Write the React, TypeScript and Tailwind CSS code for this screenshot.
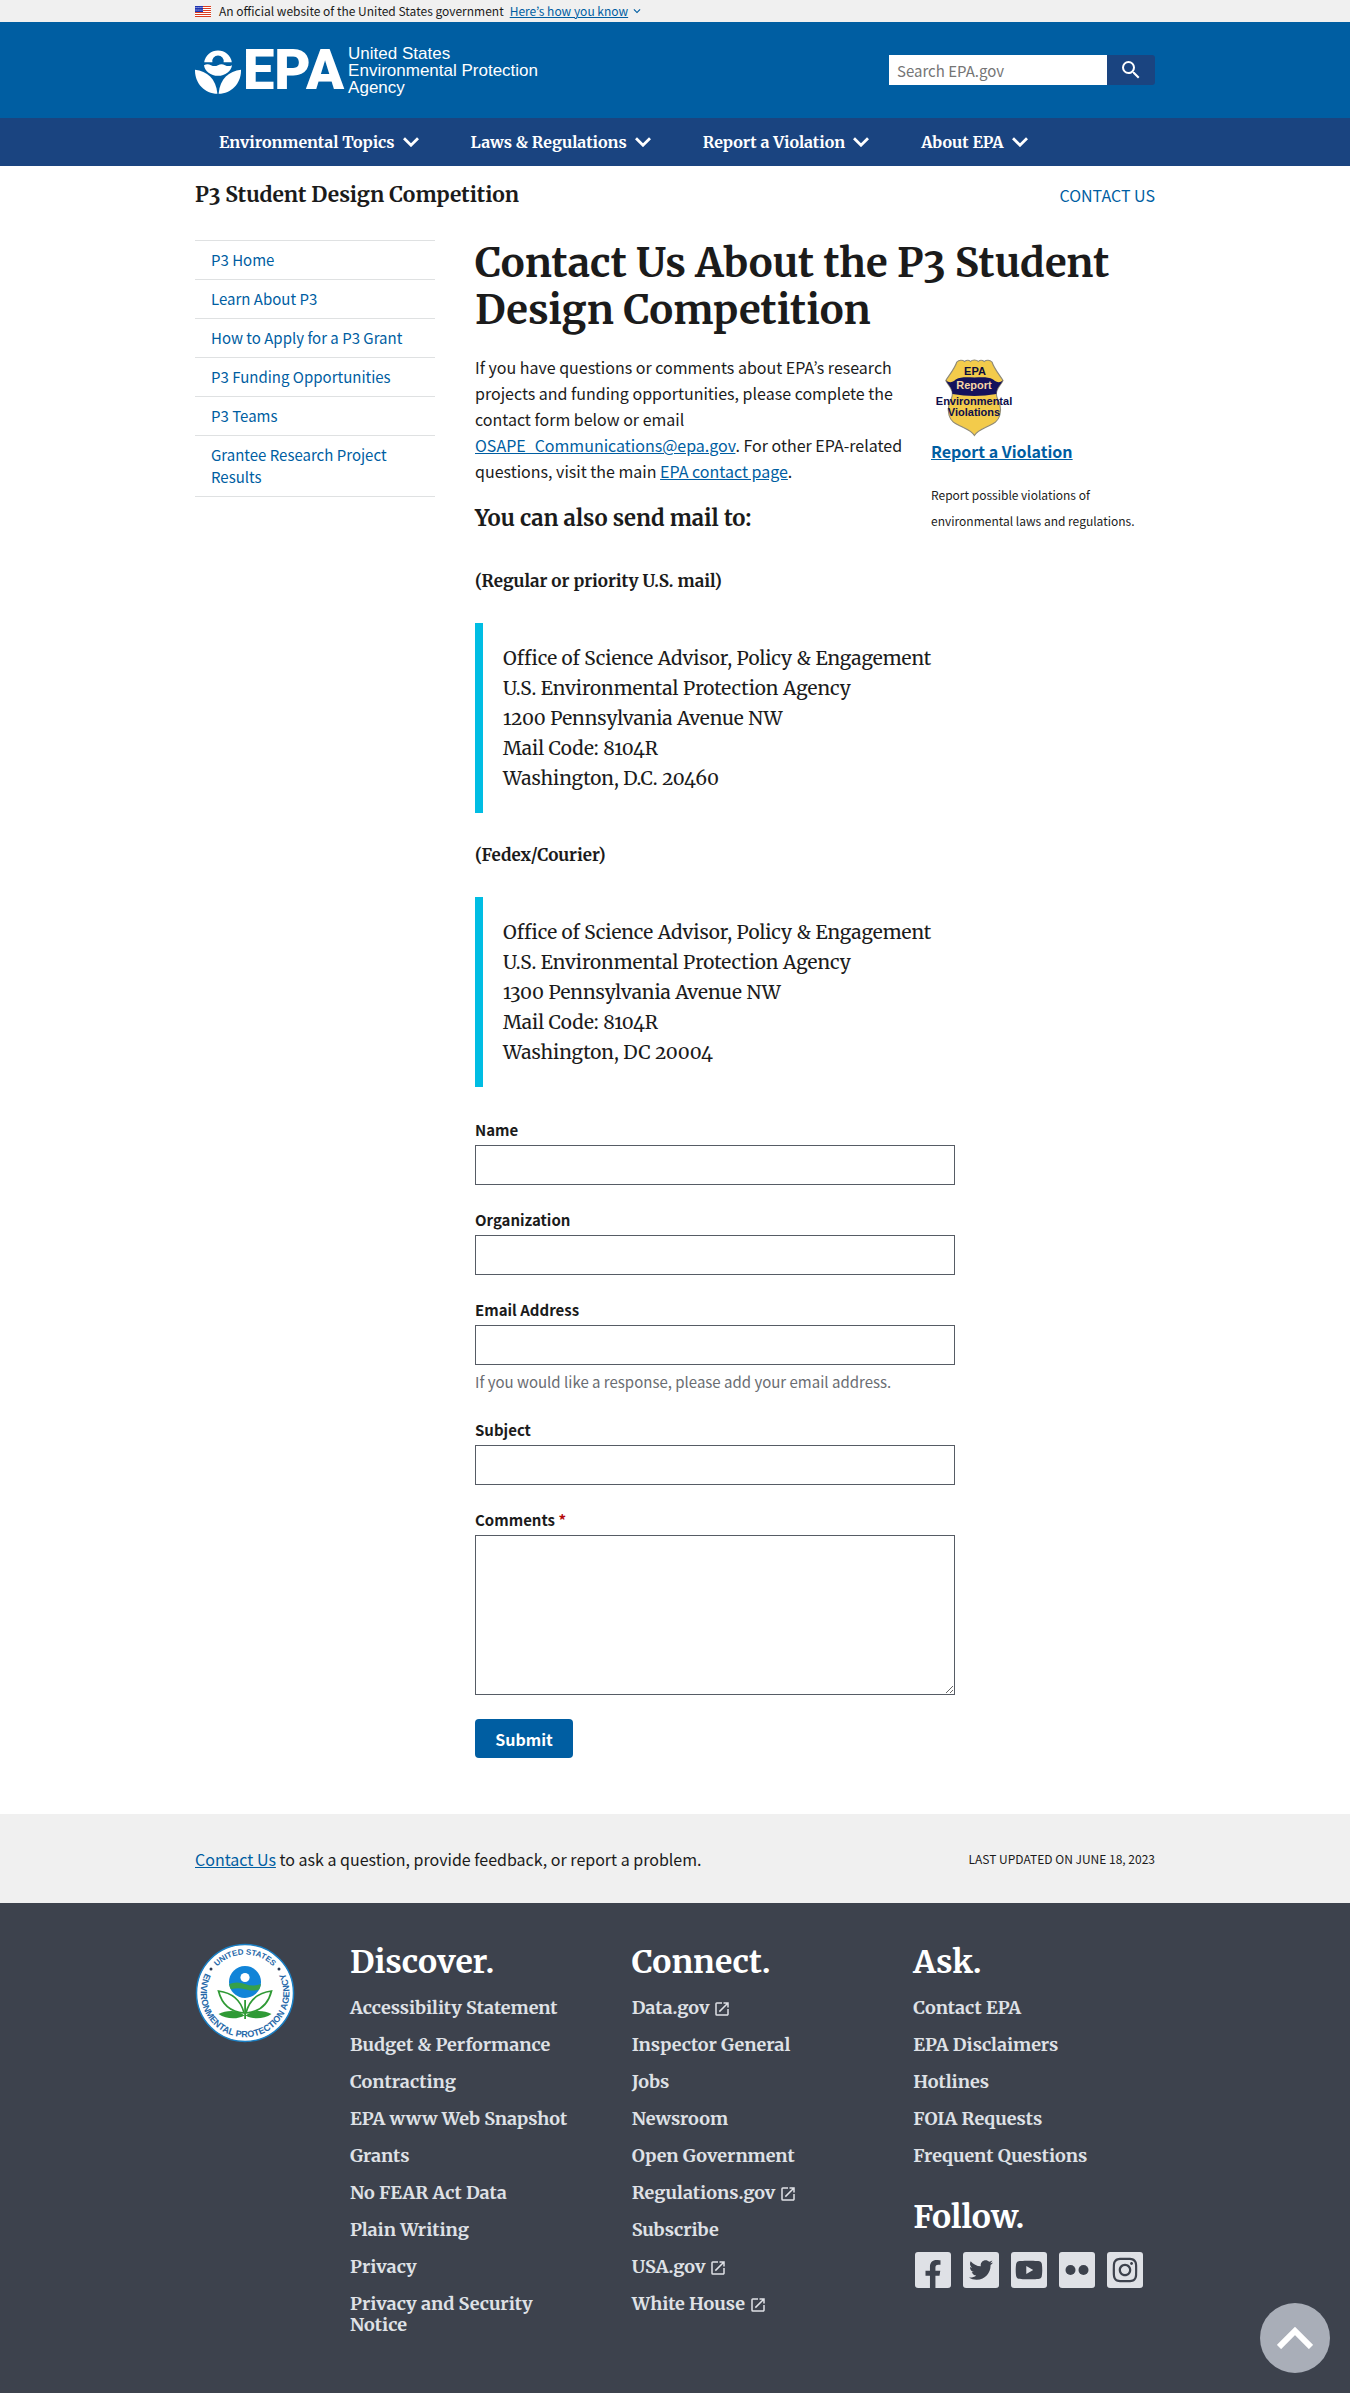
import type { ReactNode } from "react";
import { FaFacebookF, FaInstagram, FaTwitter, FaYoutube } from "react-icons/fa";
import { MdExpandMore, MdLaunch, MdSearch } from "react-icons/md";

const sans = "font-['Noto_Sans_CJK_KR','Open_Sans',sans-serif]";
const serif = "font-['Merriweather','Noto_Serif','DejaVu_Serif_Condensed',serif] oldstyle-nums";
const shell = "mx-auto w-full max-w-[960px]";
const link = "text-[#005ea2] underline";

const navItems = ["Environmental Topics", "Laws & Regulations", "Report a Violation", "About EPA"];

const sideLinks = [
  "P3 Home",
  "Learn About P3",
  "How to Apply for a P3 Grant",
  "P3 Funding Opportunities",
  "P3 Teams",
  "Grantee Research Project Results",
];

type FooterLink = { label: string; external?: boolean };

const discover: FooterLink[] = [
  { label: "Accessibility Statement" },
  { label: "Budget & Performance" },
  { label: "Contracting" },
  { label: "EPA www Web Snapshot" },
  { label: "Grants" },
  { label: "No FEAR Act Data" },
  { label: "Plain Writing" },
  { label: "Privacy" },
  { label: "Privacy and Security Notice" },
];

const connect: FooterLink[] = [
  { label: "Data.gov", external: true },
  { label: "Inspector General" },
  { label: "Jobs" },
  { label: "Newsroom" },
  { label: "Open Government" },
  { label: "Regulations.gov", external: true },
  { label: "Subscribe" },
  { label: "USA.gov", external: true },
  { label: "White House", external: true },
];

const ask: FooterLink[] = [
  { label: "Contact EPA" },
  { label: "EPA Disclaimers" },
  { label: "Hotlines" },
  { label: "FOIA Requests" },
  { label: "Frequent Questions" },
];

function Chevron({ className }: { className?: string }) {
  return (
    <svg viewBox="0 0 16 10" className={className} fill="none" stroke="currentColor" strokeWidth="2.8" aria-hidden="true">
      <path d="M1 1.2 8 8.2l7-7" />
    </svg>
  );
}

function Flag() {
  return (
    <svg viewBox="0 0 16 11" className="h-[11px] w-4 shrink-0" aria-hidden="true">
      <rect width="16" height="11" fill="#fff" />
      {[0, 2, 4, 6, 8, 10].map((y) => (
        <rect key={y} y={y} width="16" height="1" fill="#db3e1f" />
      ))}
      <rect width="8" height="6" fill="#1e33b1" />
      {[1, 3, 5, 7].map((x) => (
        <g key={x} fill="#fff">
          <rect x={x - 0.4} y="1" width="0.9" height="0.9" />
          <rect x={x - 0.4} y="3.6" width="0.9" height="0.9" />
        </g>
      ))}
    </svg>
  );
}

function Logo() {
  return (
    <a href="#home" aria-label="EPA home" className="flex items-center text-white">
      <svg viewBox="0 0 46 47" className="h-[47px] w-[46px]" fill="currentColor" aria-hidden="true">
        <path d="M9.200 15.200a14 14 0 0 1 27.600 0h-8.200a5.700 5.700 0 1 0-11.200 0z" />
        <circle cx="23" cy="14" r="3.900" fill="#005ea2" />
        <path d="M9 18.200c2.400-1.200 4.600-1.200 7 0s4.600 1.200 7 0 4.600-1.200 7 0 4.600 1.200 7 0c-.8 6-6.800 10.600-14 10.600S9.800 24.200 9 18.200z" />
        <path d="M0 22.800c12 1.600 21 8.600 22.400 24C9.400 46.200-.2 36.400 0 22.800z" />
        <path d="M46 22.800c-12 1.600-21 8.600-22.400 24C36.600 46.200 46.200 36.400 46 22.800z" />
      </svg>
      <span className="pl-0.5 font-['Roboto',sans-serif] text-[56px] leading-[66px] font-black">EPA</span>
      <span className="ml-1 font-['Liberation_Sans',Arial,sans-serif] text-[17px] leading-[17px]">
        United States
        <br />
        Environmental Protection
        <br />
        Agency
      </span>
    </a>
  );
}

function Badge() {
  return (
    <svg viewBox="0 0 90 80" className="h-20 w-[90px]" role="img" aria-label="EPA Report Environmental Violations">
      <g transform="translate(-5 0) scale(1.1 1)">
        <path
          d="M28 4c2-2 5-2.500 7-.5 2-1.500 4-1.500 5.500 0C42 1.500 46 1.500 47.500 3.500c1.500-1.500 3.500-1.500 5.500 0 2-2 5-1.500 7 .5 2 7 7 13 10 18.500-2 4.500-6 8-6 13 0 3 1 6 3 10 1 4 1 8 0 12-2 8-8 9-13 12-4 2-8 4.500-10 8-2-3.500-6-6-10-8-5-3-11-4-13-12-1-4-1-8 0-12 2-4 3-7 3-10 0-5-4-8.500-6-13C21 17 26 11 28 4z"
          fill="#f3cb4b"
          stroke="#8f8a78"
          strokeWidth="1"
        />
        <path d="M18 22c3 3.500 6 2.500 9-.5C32 18.500 38 19.500 44 19.500s12-1 17 2c3.500 3 6 4 9 .5-2 5-6 7.500-6 14-14 2.500-26 2.500-40 0 0-6.500-4-9-6-14z" fill="#14125c" />
      </g>
      <g className="font-['Liberation_Sans',Arial,sans-serif] text-[11px] font-bold" textAnchor="middle">
        <text x="44" y="17" fill="#0d0d3a">EPA</text>
        <text x="43" y="31" fill="#f7d6a8">Report</text>
        <text x="43" y="47" fill="#0d0d4a">Environmental</text>
        <text x="43" y="58" fill="#0d0d4a">Violations</text>
      </g>
    </svg>
  );
}

function Seal() {
  return (
    <svg viewBox="0 0 100 100" className="size-[100px]" role="img" aria-label="United States Environmental Protection Agency seal">
      <defs>
        <path id="seal-top" d="M11.500 50a38.500 38.500 0 0 1 77 0" />
        <path id="seal-bottom" d="M23.300 14.600a44.300 44.300 0 1 0 53.400 0" />
      </defs>
      <circle cx="50" cy="50" r="48.500" fill="#fff" stroke="#1a7fc4" strokeWidth="1.500" />
      <g className="font-['Liberation_Sans',Arial,sans-serif] text-[8px] font-bold" fill="#2668a8" textAnchor="middle">
        <text>
          <textPath href="#seal-top" startOffset="50%">UNITED STATES</textPath>
        </text>
        <text className="text-[9px]">
          <textPath href="#seal-bottom" startOffset="50%">ENVIRONMENTAL PROTECTION AGENCY</textPath>
        </text>
      </g>
      <circle cx="16" cy="26" r="1.500" fill="#2b3a55" />
      <circle cx="84" cy="26" r="1.500" fill="#2b3a55" />
      <circle cx="50" cy="39" r="16" fill="#1184d8" />
      <path d="M34.200 41c5-2 10.500-2 15.800 0s10.800 2 15.800 0c-.3 2.500-.8 4-1.600 5.500-5 1.500-9 1.200-14.200-.3s-9.200-1.200-14.200 0c-.8-1.500-1.400-3-1.600-5.200z" fill="#36a04a" />
      <circle cx="50" cy="34.500" r="4.600" fill="#fff" />
      <path d="M49.200 57h1.800v19h-1.800z" fill="#2f9a35" />
      <g fill="#fff" stroke="#2f9a35" strokeWidth="1.700">
        <path d="M23.500 48c12 1.500 22 8 25.500 22-13-1-22-8-25.500-22z" />
        <path d="M76.500 48c-12 1.500-22 8-25.500 22 13-1 22-8 25.500-22z" />
      </g>
      <g fill="#2f9a35">
        <path d="M23.500 71c8-4 19-4.500 26 1.500-7 4-18 4-26-1.500z" />
        <path d="M76.500 71c-8-4-19-4.500-26 1.500 7 4 18 4 26-1.500z" />
      </g>
    </svg>
  );
}

function Field({ id, label, hint }: { id: string; label: string; hint?: string }) {
  return (
    <div>
      <label htmlFor={id} className="mb-1 block leading-[22px] font-bold">
        {label}
      </label>
      <input
        id={id}
        type="text"
        aria-describedby={hint ? `${id}-hint` : undefined}
        className="block h-10 w-full max-w-[480px] border border-[#565c65] bg-white px-2"
      />
      {hint && (
        <p id={`${id}-hint`} className="mt-1 leading-[26px] text-[#6a6d72]">
          {hint}
        </p>
      )}
    </div>
  );
}

function Address({ lines }: { lines: string[] }) {
  return (
    <blockquote className={`mt-8 border-l-8 border-[#00bde3] p-5 text-[19px] leading-[30px] ${serif}`}>
      {lines.map((line) => (
        <div key={line}>{line}</div>
      ))}
    </blockquote>
  );
}

function FooterHeading({ children }: { children: ReactNode }) {
  return <h2 className="mb-4 text-[32px] leading-[38px] font-bold text-white">{children}</h2>;
}

function FooterLinks({ items }: { items: FooterLink[] }) {
  return (
    <ul className="flex flex-col gap-4 text-[18px] leading-[21px] font-bold text-[#dfe1e6]">
      {items.map(({ label, external }) => (
        <li key={label}>
          <a href="#footer">
            {label}
            {external && <MdLaunch className="ml-1 inline size-[18px] align-[-4px]" />}
          </a>
        </li>
      ))}
    </ul>
  );
}

function Social({ label, children }: { label: string; children: ReactNode }) {
  return (
    <a href="#follow" aria-label={label} className="flex size-9 items-center justify-center overflow-hidden rounded-[3px] bg-[#dfe1e6] text-[#3d424d]">
      {children}
    </a>
  );
}

export default function App() {
  return (
    <div className={`bg-white text-[15px] text-[#1b1b1b] ${sans}`}>
      <div className="bg-[#f0f0f0]">
        <div className={`${shell} flex h-[22px] items-center text-[12px] leading-[22px]`}>
          <Flag />
          <span className="ml-2">An official website of the United States government</span>
          <button type="button" className="ml-1.5 flex items-center text-[#005ea2]">
            <span className="underline">Here’s how you know</span>
            <MdExpandMore className="ml-0.5 size-3.5" />
          </button>
        </div>
      </div>

      <header>
        <div className="bg-[#005ea2]">
          <div className={`${shell} flex h-24 items-center justify-between`}>
            <Logo />
            <form role="search" className="flex" onSubmit={(e) => e.preventDefault()}>
              <input
                type="search"
                aria-label="Search EPA.gov"
                placeholder="Search EPA.gov"
                className="h-[30px] w-[218px] bg-white px-2 placeholder:text-[#757575]"
              />
              <button type="submit" aria-label="Search" className="flex h-[30px] w-12 items-center justify-center rounded-r-[3px] bg-[#1a4480] text-white">
                <MdSearch className="size-6" />
              </button>
            </form>
          </div>
        </div>
        <nav aria-label="Primary" className="bg-[#1a4480]">
          <ul className={`${shell} flex h-12 items-center gap-[52px] px-6 text-[16px] font-bold text-white ${serif}`}>
            {navItems.map((item) => (
              <li key={item}>
                <button type="button" className="flex items-center gap-2">
                  {item}
                  <Chevron className="h-2.5 w-4" />
                </button>
              </li>
            ))}
          </ul>
        </nav>
      </header>

      <div className={`${shell} pt-[15px]`}>
        <div className="flex items-center justify-between">
          <p className={`text-[21px] leading-7 font-bold ${serif}`}>P3 Student Design Competition</p>
          <a href="#contact" className="text-[16px] text-[#005ea2]">
            CONTACT US
          </a>
        </div>

        <div className="mt-[31px] flex gap-10 pb-14">
          <nav aria-label="Section" className="w-60 shrink-0">
            <ul className="border-b border-[#dfe1e2]">
              {sideLinks.map((item) => (
                <li key={item} className="border-t border-[#dfe1e2] px-4 py-2 leading-[22px] text-[#005ea2]">
                  <a href="#section">{item}</a>
                </li>
              ))}
            </ul>
          </nav>

          <main className="min-w-0 flex-1">
            <h1 className={`text-[40px] leading-[47px] font-bold ${serif}`}>Contact Us About the P3 Student Design Competition</h1>

            <div className="mt-5 flex justify-between gap-6">
              <div className="min-w-0 flex-1">
                <p className="text-[16px] leading-[26px]">
                  If you have questions or comments about EPA’s research projects and funding opportunities, please complete the contact form below or email{" "}
                  <a href="#mail" className={link}>
                    OSAPE_Communications@epa.gov
                  </a>
                  . For other EPA-related questions, visit the main{" "}
                  <a href="#contact" className={link}>
                    EPA contact page
                  </a>
                  .
                </p>
                <h3 className={`mt-5 text-[22px] leading-7 font-bold ${serif}`}>You can also send mail to:</h3>
              </div>
              <aside className="w-56 shrink-0 pt-1">
                <Badge />
                <a href="#report" className={`${link} block text-[16px] leading-[26px] font-bold`}>
                  Report a Violation
                </a>
                <p className="mt-[18px] text-[12px] leading-[26px]">Report possible violations of environmental laws and regulations.</p>
              </aside>
            </div>

            <h4 className={`mt-[37px] text-[17px] leading-5 font-bold ${serif}`}>(Regular or priority U.S. mail)</h4>
            <Address
              lines={[
                "Office of Science Advisor, Policy & Engagement",
                "U.S. Environmental Protection Agency",
                "1200 Pennsylvania Avenue NW",
                "Mail Code: 8104R",
                "Washington, D.C. 20460",
              ]}
            />
            <h4 className={`mt-8 text-[17px] leading-5 font-bold ${serif}`}>(Fedex/Courier)</h4>
            <Address
              lines={[
                "Office of Science Advisor, Policy & Engagement",
                "U.S. Environmental Protection Agency",
                "1300 Pennsylvania Avenue NW",
                "Mail Code: 8104R",
                "Washington, DC 20004",
              ]}
            />

            <form className="mt-8 flex flex-col gap-6" onSubmit={(e) => e.preventDefault()}>
              <Field id="name" label="Name" />
              <Field id="organization" label="Organization" />
              <Field id="email" label="Email Address" hint="If you would like a response, please add your email address." />
              <Field id="subject" label="Subject" />
              <div>
                <label htmlFor="comments" className="mb-1 block leading-[22px] font-bold">
                  Comments <span className="text-[#b50909]">*</span>
                </label>
                <textarea id="comments" required className="block h-40 w-full max-w-[480px] resize border border-[#565c65] bg-white p-2" />
              </div>
              <button type="submit" className="h-[39px] w-[98px] rounded-[4px] bg-[#005ea2] text-[16px] font-bold text-white">
                Submit
              </button>
            </form>
          </main>
        </div>
      </div>

      <div className="bg-[#f0f0f0]">
        <div className={`${shell} flex h-[89px] items-center justify-between`}>
          <p className="text-[16px]">
            <a href="#contact" className={link}>
              Contact Us
            </a>{" "}
            to ask a question, provide feedback, or report a problem.
          </p>
          <p className="text-[12px]">LAST UPDATED ON JUNE 18, 2023</p>
        </div>
      </div>

      <footer className={`bg-[#3d424d] pt-10 pb-[58px] ${serif}`}>
        <div className={`${shell} flex gap-10`}>
          <div className="w-[115px] shrink-0">
            <Seal />
          </div>
          <div className="grid min-w-0 flex-1 grid-cols-3 gap-10">
            <section>
              <FooterHeading>Discover.</FooterHeading>
              <FooterLinks items={discover} />
            </section>
            <section>
              <FooterHeading>Connect.</FooterHeading>
              <FooterLinks items={connect} />
            </section>
            <section>
              <FooterHeading>Ask.</FooterHeading>
              <FooterLinks items={ask} />
              <div className="mt-8">
                <FooterHeading>Follow.</FooterHeading>
                <div className="flex gap-3 pl-0.5">
                  <Social label="Facebook">
                    <FaFacebookF className="mt-2 size-7" />
                  </Social>
                  <Social label="Twitter">
                    <FaTwitter className="size-6" />
                  </Social>
                  <Social label="YouTube">
                    <FaYoutube className="size-7" />
                  </Social>
                  <Social label="Flickr">
                    <svg viewBox="0 0 24 12" className="h-3 w-6" fill="currentColor" aria-hidden="true">
                      <circle cx="5.500" cy="6" r="5" />
                      <circle cx="18.500" cy="6" r="5" />
                    </svg>
                  </Social>
                  <Social label="Instagram">
                    <FaInstagram className="size-7" />
                  </Social>
                </div>
              </div>
            </section>
          </div>
        </div>
      </footer>

      <a href="#top" aria-label="Back to top" className="fixed right-5 bottom-5 flex size-[70px] items-center justify-center rounded-full bg-[#a9aeb8] text-white">
        <svg viewBox="0 0 36 22" className="h-[22px] w-9" fill="none" stroke="currentColor" strokeWidth="6" aria-hidden="true">
          <path d="M2 20 18 4l16 16" />
        </svg>
      </a>
    </div>
  );
}
